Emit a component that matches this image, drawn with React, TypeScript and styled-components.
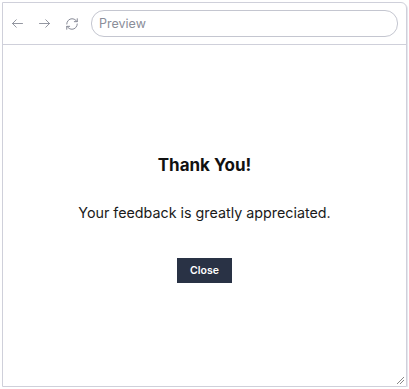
import { createGlobalStyle } from 'styled-components';
import styled from 'styled-components';

const GlobalStyle = createGlobalStyle`
    html, body {
        margin: 0;
        padding: 0;
        background: #fff;
    }
    body {
        font-family: Inter, 'Noto Sans', sans-serif;
    }
`;

const Frame = styled.div`
    margin: 2px 0 0 2px;
    width: 405px;
    height: 385px;
    box-sizing: border-box;
    border: 1px solid #cfd0da;
    border-radius: 0 6px 0 0;
    box-shadow: 1px 1px 0 #e6e6ee;
    display: flex;
    flex-direction: column;
    position: relative;
`;

const Toolbar = styled.div`
    height: 41px;
    flex-shrink: 0;
    display: flex;
    align-items: center;
    padding: 0 8px 0 5px;
    border-bottom: 1px solid #cfd0da;
    gap: 8px;
`;

const NavButton = styled.button`
    width: 19px;
    height: 19px;
    padding: 0;
    border: 0;
    background: none;
    color: #868995;
    display: flex;
    align-items: center;
    justify-content: center;
`;

const AddressBar = styled.div`
    flex: 1;
    height: 25px;
    margin-left: 2px;
    border: 1px solid #c4c6d0;
    border-radius: 13px;
    display: flex;
    align-items: center;
    padding: 0 7px;
    font-size: 12.5px;
    color: #8a8d99;
`;

const Content = styled.div`
    flex: 1;
    display: flex;
    flex-direction: column;
    align-items: center;
    justify-content: center;
    padding-top: 6px;
`;

const Title = styled.h2`
    margin: 0;
    font-size: 17px;
    font-weight: 700;
    color: #111;
    line-height: 22px;
`;

const Message = styled.p`
    margin: 26px 0 0;
    font-size: 14.3px;
    color: #1a1a1a;
    line-height: 22px;
`;

const CloseButton = styled.button`
    margin-top: 34px;
    width: 55px;
    height: 25px;
    border: 0;
    border-radius: 0;
    background: #293245;
    color: #fff;
    font-family: Inter, sans-serif;
    font-size: 10.5px;
    font-weight: 600;
    padding: 0;
`;

const Grip = styled.svg`
    position: absolute;
    right: 1px;
    bottom: 1px;
`;

const Arrow = ({ dir }: { dir: 'left' | 'right' }) => (
    <svg width="15" height="15" viewBox="0 0 24 24" fill="none" stroke="currentColor" strokeWidth="1.4" strokeLinecap="round" strokeLinejoin="round">
        {dir === 'left' ? (
            <>
                <path d="M20 12H4" />
                <path d="M10 18l-6-6 6-6" />
            </>
        ) : (
            <>
                <path d="M4 12h16" />
                <path d="M14 6l6 6-6 6" />
            </>
        )}
    </svg>
);

const Refresh = () => (
    <svg width="14" height="14" viewBox="0 0 24 24" fill="none" stroke="currentColor" strokeWidth="1.7" strokeLinecap="round" strokeLinejoin="round">
        <path d="M3 12a9 9 0 0 1 9-9 9.75 9.75 0 0 1 6.74 2.74L21 8" />
        <path d="M21 3v5h-5" />
        <path d="M21 12a9 9 0 0 1-9 9 9.75 9.75 0 0 1-6.74-2.74L3 16" />
        <path d="M8 16H3v5" />
    </svg>
);

export default function App() {
    return (
        <>
            <GlobalStyle />
            <Frame>
                <Toolbar>
                    <NavButton>
                        <Arrow dir="left" />
                    </NavButton>
                    <NavButton>
                        <Arrow dir="right" />
                    </NavButton>
                    <NavButton>
                        <Refresh />
                    </NavButton>
                    <AddressBar>Preview</AddressBar>
                </Toolbar>
                <Content>
                    <Title>Thank You!</Title>
                    <Message>Your feedback is greatly appreciated.</Message>
                    <CloseButton>Close</CloseButton>
                </Content>
                <Grip width="10" height="10" viewBox="0 0 10 10">
                    <path d="M9 2L2 9M9 5L5 9" stroke="#888" strokeWidth="1" />
                </Grip>
            </Frame>
        </>
    );
}
